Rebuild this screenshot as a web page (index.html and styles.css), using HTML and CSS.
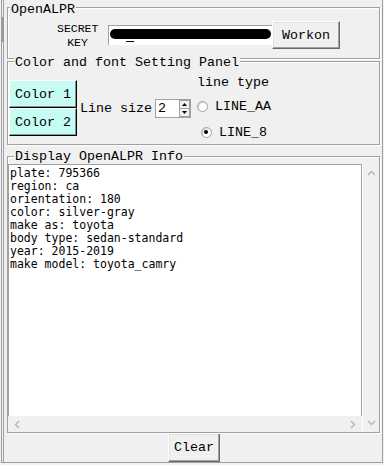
FILE: index.html
```html
<!DOCTYPE html>
<html lang="en">
<head>
  <meta charset="UTF-8">
  <title>OpenALPR</title>
  <link rel="stylesheet" href="styles.css">
</head>
<body>

  <div class="app">

    <div class="group group-key">
      <span class="group-title">OpenALPR</span>
      <div class="key-row">
        <label class="key-label">SECRET<br>KEY</label>
        <div class="key-entry">
          <span class="key-mask"></span>
          <span class="key-cursor"></span>
        </div>
        <button class="btn btn-workon">Workon</button>
      </div>
    </div>

    <div class="group group-panel">
      <span class="group-title">Color and font Setting Panel</span>
      <div class="panel-row">
        <div class="color-btns">
          <button class="btn btn-color">Color 1</button>
          <button class="btn btn-color">Color 2</button>
        </div>
        <div class="line-size">
          <span>Line size</span>
          <div class="spin">
            <span class="spin-value">2</span>
            <span class="spin-arrows">
              <svg width="11" height="17" viewBox="0 0 11 17">
                <rect x="0.5" y="0.5" width="10" height="16" fill="#f0f0f0" stroke="#a0a0a0"/>
                <line x1="0" y1="8.5" x2="11" y2="8.5" stroke="#a0a0a0"/>
                <path d="M3 6 L5.5 3 L8 6 Z" fill="#000"/>
                <path d="M3 11 L5.5 14 L8 11 Z" fill="#000"/>
              </svg>
            </span>
          </div>
        </div>
        <div class="line-type">
          <div class="line-type-title">line type</div>
          <label class="radio"><span class="radio-dot"></span>LINE_AA</label>
          <label class="radio radio-on"><span class="radio-dot"></span>LINE_8</label>
        </div>
      </div>
    </div>

    <div class="group group-info">
      <span class="group-title">Display OpenALPR Info</span>
      <div class="text-wrap">
        <pre class="text-area">plate: 795366
region: ca
orientation: 180
color: silver-gray
make as: toyota
body type: sedan-standard
year: 2015-2019
make model: toyota_camry</pre>
        <div class="vscroll">
          <svg width="9" height="6" viewBox="0 0 9 6"><path d="M1 5 L4.5 1.5 L8 5" fill="none" stroke="#b4b4b4" stroke-width="1.4"/></svg>
          <svg width="9" height="6" viewBox="0 0 9 6"><path d="M1 1 L4.5 4.5 L8 1" fill="none" stroke="#b4b4b4" stroke-width="1.4"/></svg>
        </div>
        <div class="hscroll">
          <svg width="6" height="9" viewBox="0 0 6 9"><path d="M5 1 L1.5 4.5 L5 8" fill="none" stroke="#b4b4b4" stroke-width="1.4"/></svg>
          <svg width="6" height="9" viewBox="0 0 6 9"><path d="M1 1 L4.5 4.5 L1 8" fill="none" stroke="#b4b4b4" stroke-width="1.4"/></svg>
        </div>
      </div>
    </div>

    <div class="bottom-bar">
      <button class="btn btn-clear">Clear</button>
    </div>

  </div>

</body>
</html>
```

FILE: styles.css
```css
body {
  margin: 0;
  background-color: #f0f0f0;
  font-family: "Liberation Mono", "Courier New", monospace;
  font-size: 13.33px;
  color: #000;
}

.app {
  position: relative;
  box-sizing: border-box;
  margin-left: 1px;
  width: 382px;
  height: 463px;
  border-left: 3px double #a0a0a0;
  border-right: 1px solid #a0a0a0;
  border-bottom: 1px solid #a0a0a0;
  padding: 7px 0 0 2px;
  display: flex;
  flex-direction: column;
}

/* dark grip on the left edge */
.app::before {
  content: "";
  position: absolute;
  left: -3px;
  top: 17px;
  width: 3px;
  height: 25px;
  background-color: #9a9a9a;
}

.group {
  position: relative;
  box-sizing: border-box;
  margin: 0 2px 0 1px;
  border: 1px solid #a0a0a0;
  box-shadow: inset 1px 1px 0 #fff, 1px 1px 0 #fff;
}

.group-title {
  position: absolute;
  top: -6px;
  left: 2px;
  padding: 0 1px;
  line-height: 15px;
  background-color: #f0f0f0;
  white-space: pre;
}

.group-panel .group-title {
  top: -7px;
  left: 6px;
}

.group-info .group-title {
  top: -8px;
  left: 6px;
}

.btn {
  box-sizing: border-box;
  font-family: inherit;
  font-size: 13.33px;
  color: #000;
  background-color: #f0f0f0;
  border: 1px solid;
  border-color: #fff #696969 #696969 #fff;
  box-shadow: inset -1px -1px 0 #a0a0a0, inset 1px 1px 0 #e3e3e3;
  padding: 0;
  margin: 0;
}

/* OpenALPR key */
.group-key {
  height: 52px;
}

.key-row {
  display: flex;
  align-items: flex-start;
  padding: 13px 0 0 49px;
}

.key-label {
  margin-top: 1px;
  width: 41px;
  font-size: 11.5px;
  line-height: 14px;
  text-align: center;
}

.key-entry {
  box-sizing: border-box;
  margin: 4px 0 0 10px;
  width: 164px;
  height: 20px;
  background-color: #fff;
  border-top: 1px solid #a0a0a0;
  border-left: 1px solid #a0a0a0;
  display: flex;
  flex-direction: column;
  align-items: flex-start;
}

.key-mask {
  margin: 3px 0 0 1px;
  width: 161px;
  height: 10px;
  border-radius: 5px;
  background-color: #000;
}

.key-cursor {
  margin: 2px 0 0 17px;
  width: 8px;
  height: 1px;
  background-color: #000;
}

.btn-workon {
  width: 68px;
  height: 28px;
}

/* color and font panel */
.group-panel {
  margin-top: 2px;
  height: 84px;
}

.panel-row {
  display: flex;
  align-items: flex-start;
  padding: 13px 0 0 1px;
}

.color-btns {
  margin-top: 5px;
  display: flex;
  flex-direction: column;
}

.btn-color {
  width: 68px;
  height: 28px;
  background-color: #c6fcf4;
  border-color: #fff #000 #000 #fff;
  box-shadow: inset -1px -1px 0 #7a9c97;
}

.line-size {
  margin: 5px 0 0 3px;
  height: 56px;
  display: flex;
  align-items: center;
  gap: 3px;
}

.spin {
  box-sizing: border-box;
  width: 36px;
  height: 19px;
  background-color: #fff;
  border: 1px solid #a0a0a0;
  display: flex;
  align-items: center;
  justify-content: space-between;
  padding: 0 0 0 2px;
}

.spin-value {
  line-height: 15px;
}

.spin-arrows {
  display: flex;
}

.line-type {
  margin: 1px 0 0 6px;
  display: flex;
  flex-direction: column;
}

.line-type-title {
  line-height: 14px;
  margin-bottom: 3px;
}

.radio {
  height: 26px;
  display: flex;
  align-items: center;
  gap: 7px;
}

.radio + .radio {
  padding-left: 4px;
}

.radio-dot {
  box-sizing: border-box;
  width: 11px;
  height: 11px;
  border-radius: 50%;
  border: 1px solid #a0a0a0;
  background-color: #fff;
  box-shadow: inset 1px 1px 0 #d4d4d4;
  display: flex;
  align-items: center;
  justify-content: center;
}

.radio-on .radio-dot::after {
  content: "";
  width: 4px;
  height: 4px;
  border-radius: 50%;
  background-color: #000;
}

/* info box */
.group-info {
  margin-top: 11px;
  height: 277px;
  padding: 7px 0 0 0;
}

.text-wrap {
  height: 268px;
  display: grid;
  grid-template-columns: 1fr 17px;
  grid-template-rows: 1fr 16px;
}

.text-area {
  margin: 0;
  padding: 2px 0 0 1px;
  background-color: #fff;
  border-top: 1px solid #a0a0a0;
  border-left: 1px solid #a0a0a0;
  border-right: 1px solid #a0a0a0;
  font-family: "DejaVu Sans Mono", monospace;
  font-size: 11.5px;
  line-height: 13px;
  overflow: hidden;
}

.vscroll {
  grid-row: 1 / 3;
  grid-column: 2;
  background-color: #f0f0f0;
  border-left: 1px solid #fff;
  display: flex;
  flex-direction: column;
  justify-content: space-between;
  align-items: center;
  padding: 6px 0 6px 0;
}

.hscroll {
  grid-row: 2;
  grid-column: 1;
  background-color: #f0f0f0;
  display: flex;
  justify-content: space-between;
  align-items: center;
  padding: 0 6px 0 6px;
}

.bottom-bar {
  display: flex;
  justify-content: center;
}

.btn-clear {
  width: 52px;
  height: 29px;
}
```
